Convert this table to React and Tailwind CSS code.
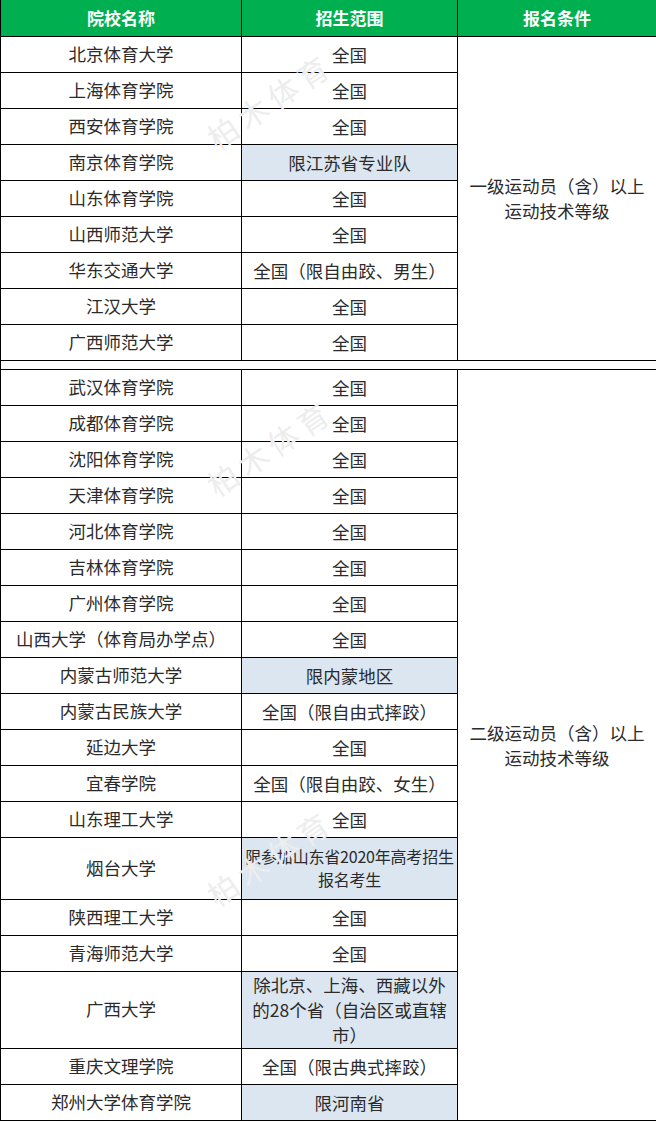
import React from "react";

const FONT = { fontFamily: '"Noto Sans CJK SC", "Noto Sans", sans-serif' };

// [school, scope, blue?, rowHeight]
const groupA = [
  ["北京体育大学", "全国"],
  ["上海体育学院", "全国"],
  ["西安体育学院", "全国"],
  ["南京体育学院", "限江苏省专业队", true],
  ["山东体育学院", "全国"],
  ["山西师范大学", "全国"],
  ["华东交通大学", "全国（限自由跤、男生）"],
  ["江汉大学", "全国"],
  ["广西师范大学", "全国"],
];

const groupB = [
  ["武汉体育学院", "全国"],
  ["成都体育学院", "全国"],
  ["沈阳体育学院", "全国"],
  ["天津体育学院", "全国"],
  ["河北体育学院", "全国"],
  ["吉林体育学院", "全国"],
  ["广州体育学院", "全国"],
  ["山西大学（体育局办学点）", "全国"],
  ["内蒙古师范大学", "限内蒙地区", true],
  ["内蒙古民族大学", "全国（限自由式摔跤）"],
  ["延边大学", "全国"],
  ["宜春学院", "全国（限自由跤、女生）"],
  ["山东理工大学", "全国"],
  ["烟台大学", ["限参加山东省2020年高考招生", "报名考生"], true, "tall"],
  ["陕西理工大学", "全国"],
  ["青海师范大学", "全国"],
  ["广西大学", "除北京、上海、西藏以外的28个省（自治区或直辖市）", true, "xtall"],
  ["重庆文理学院", "全国（限古典式摔跤）"],
  ["郑州大学体育学院", "限河南省", true],
];

const rowH = (kind) =>
  kind === "tall" ? "h-[62px]" : kind === "xtall" ? "h-[77px]" : "h-[36px]";

const Rows = ({ rows, condition }) =>
  rows.map(([school, scope, blue, kind], i) => (
    <tr key={school} className={rowH(kind)}>
      <td className="border border-black text-center text-[17.5px] text-[#2b2b2b] whitespace-nowrap">{school}</td>
      <td
        className={`border border-black text-center text-[#2b2b2b] ${
          blue ? "bg-[#dce6f1]" : "bg-white"
        } ${kind === "tall" ? "text-[16px] leading-[23px] px-0 whitespace-nowrap tracking-[-0.2px]" : "text-[17.5px] leading-[25px] px-[7px]"}`}
      >
        {Array.isArray(scope) ? (
          <>
            {scope[0]}
            <br />
            {scope[1]}
          </>
        ) : (
          scope
        )}
      </td>
      {i === 0 && (
        <td
          rowSpan={rows.length}
          className="border border-black text-center text-[17.5px] leading-[25px] text-[#2b2b2b] align-middle whitespace-nowrap"
        >
          {condition[0]}
          <br />
          {condition[1]}
        </td>
      )}
    </tr>
  ));

const Watermark = ({ top }) => (
  <div
    className="absolute left-[198px] -rotate-[34deg] text-[30px] tracking-[6px] text-[#ededed] pointer-events-none select-none"
    style={{ top }}
  >
    柏木体育
  </div>
);

export default function App() {
  return (
    <div className="relative w-[656px] h-[1122px] bg-white overflow-hidden" style={FONT}>
      <table className="w-[656px] table-fixed border-collapse">
        <colgroup>
          <col className="w-[241px]" />
          <col className="w-[216px]" />
          <col className="w-[199px]" />
        </colgroup>
        <thead>
          <tr className="h-[36px] bg-[#00b050]">
            {["院校名称", "招生范围", "报名条件"].map((h) => (
              <th key={h} className="border border-black border-t-0 text-center text-[17px] font-bold text-white">
                {h}
              </th>
            ))}
          </tr>
        </thead>
        <tbody>
          <Rows rows={groupA} condition={["一级运动员（含）以上", "运动技术等级"]} />
          <tr className="h-[9px]">
            <td colSpan={3} className="border-x border-black p-0"></td>
          </tr>
          <Rows rows={groupB} condition={["二级运动员（含）以上", "运动技术等级"]} />
        </tbody>
      </table>
      <Watermark top="78px" />
      <Watermark top="425px" />
      <Watermark top="835px" />
    </div>
  );
}
